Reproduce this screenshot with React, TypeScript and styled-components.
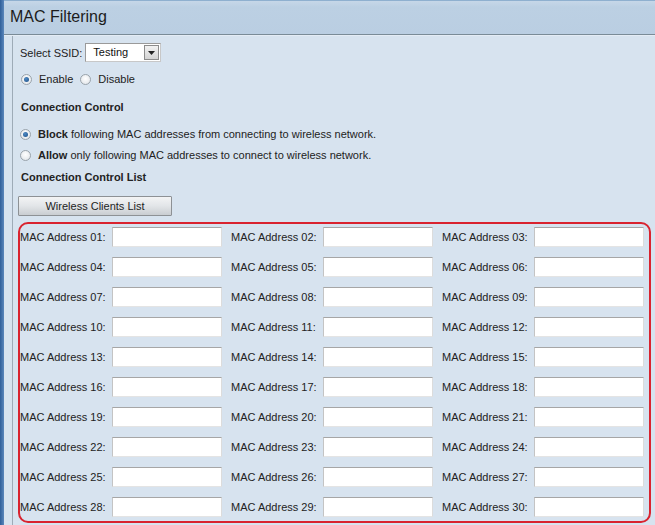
import styled, { createGlobalStyle } from 'styled-components';

const GlobalStyle = createGlobalStyle`
  html, body {
    margin: 0;
    padding: 0;
  }
  body {
    font-family: 'Liberation Sans', Arial, sans-serif;
    font-size: 11px;
    color: #222;
  }
`;

const macNumbers = Array.from({ length: 30 }, (_, i) => String(i + 1).padStart(2, '0'));

const Radio: React.FC<{ checked?: boolean }> = ({ checked }) => (
  <RadioDot $checked={checked} />
);

const App = () => {
  return (
    <Page>
      <GlobalStyle />
      <LeftStrip />
      <Main>
        <Header>
          <Title>MAC Filtering</Title>
        </Header>
        <Body>
          <Panel>
            <Row $top={7} $height={19}>
              <span>Select SSID:</span>
              <Select>
                <SelectValue>Testing</SelectValue>
                <SelectArrow>
                  <svg width="7" height="4" viewBox="0 0 7 4">
                    <path d="M0 0 L7 0 L3.5 4 Z" fill="#222" />
                  </svg>
                </SelectArrow>
              </Select>
            </Row>
            <Row $top={10} $height={14} $shift={-1}>
              <Radio checked />
              <OptionText>Enable</OptionText>
              <Radio />
              <OptionText>Disable</OptionText>
            </Row>
            <Heading $top={14}>Connection Control</Heading>
            <Row $top={13} $height={14} $shift={-2}>
              <Radio checked />
              <OptionText><b>Block</b> following MAC addresses from connecting to wireless network.</OptionText>
            </Row>
            <Row $top={7} $height={14} $shift={-2}>
              <Radio />
              <OptionText><b>Allow</b> only following MAC addresses to connect to wireless network.</OptionText>
            </Row>
            <Heading $top={8}>Connection Control List</Heading>
            <ClientsButton>Wireless Clients List</ClientsButton>
            <Highlight>
              <MacGrid>
                {macNumbers.map((n) => (
                  <MacCell key={n}>
                    <MacLabel>MAC Address {n}:</MacLabel>
                    <MacInput />
                  </MacCell>
                ))}
              </MacGrid>
            </Highlight>
          </Panel>
        </Body>
      </Main>
    </Page>
  );
};

const Page = styled.div`
  display: flex;
  width: 655px;
  height: 525px;
  overflow: hidden;
  background: #d7e3ef;
`;

const LeftStrip = styled.div`
  width: 4px;
  flex-shrink: 0;
  background: linear-gradient(to right, #2f5f9a, #5b87bb);
`;

const Main = styled.div`
  flex: 1;
  display: flex;
  flex-direction: column;
`;

const Header = styled.div`
  height: 35px;
  box-sizing: border-box;
  display: flex;
  align-items: center;
  padding-left: 6px;
  background: linear-gradient(to bottom, #c6d7e8 0px, #bcd0e3 6px, #bacee2 100%);
  border-top: 1px solid #8fb0cf;
  border-bottom: 1px solid #7a8b97;
`;

const Title = styled.h1`
  margin: 0;
  font-size: 16px;
  font-weight: normal;
  color: #1c1c1c;
  padding-bottom: 1px;
`;

const Body = styled.div`
  flex: 1;
  padding-left: 8px;
  background: #d7e3ef;
  border-top: 1px solid #e4ecf5;
  display: flex;
`;

const Panel = styled.div`
  flex: 1;
  border-left: 1px solid #9eabb7;
  padding-left: 7px;
  display: flex;
  flex-direction: column;
  align-items: flex-start;
`;

const Row = styled.div<{ $top: number; $height: number; $shift?: number }>`
  display: flex;
  align-items: center;
  margin-top: ${(p) => p.$top}px;
  margin-left: ${(p) => p.$shift ?? 0}px;
  height: ${(p) => p.$height}px;
  gap: 5px;
`;

const Select = styled.div`
  display: flex;
  width: 76px;
  height: 19px;
  margin-left: -2px;
  box-sizing: border-box;
  background: #fff;
  border: 1px solid #9a9a9a;
  border-right-color: #c8c8c8;
  border-bottom-color: #c8c8c8;
`;

const SelectValue = styled.span`
  flex: 1;
  padding-left: 7px;
  line-height: 16px;
  font-size: 11px;
  color: #111;
`;

const SelectArrow = styled.span`
  width: 15px;
  margin: 1px;
  display: flex;
  align-items: center;
  justify-content: center;
  background: linear-gradient(to bottom, #f2f2f2, #d4d4d4);
  border: 1px solid #8c8c8c;
  box-sizing: border-box;
`;

const RadioDot = styled.span<{ $checked?: boolean }>`
  width: 11px;
  height: 11px;
  box-sizing: border-box;
  border-radius: 50%;
  border: 1px solid #9aa3ab;
  background: radial-gradient(circle at 50% 40%, #ffffff 0%, #e7eaed 70%, #d3d8dd 100%);
  position: relative;
  flex-shrink: 0;
  margin-left: 2px;

  &::after {
    content: '';
    display: ${(p) => (p.$checked ? 'block' : 'none')};
    position: absolute;
    left: 2px;
    top: 2px;
    width: 5px;
    height: 5px;
    border-radius: 50%;
    background: radial-gradient(circle at 40% 35%, #4f8ac4, #1c4f86);
  }
`;

const OptionText = styled.span`
  margin-left: 2px;
  color: #222;
`;

const Heading = styled.div<{ $top: number }>`
  margin-top: ${(p) => p.$top}px;
  height: 14px;
  line-height: 14px;
  font-weight: bold;
  color: #222;
  margin-left: 1px;
`;

const ClientsButton = styled.button`
  margin-top: 12px;
  margin-left: -2px;
  width: 154px;
  height: 20px;
  padding: 0;
  box-sizing: border-box;
  font-family: 'Liberation Sans', Arial, sans-serif;
  font-size: 11px;
  color: #1e1e1e;
  background: linear-gradient(to bottom, #f3f4f5 0%, #e2e5e8 50%, #c9cdd1 100%);
  border: 1px solid #8d9195;
  border-radius: 1px;
`;

const Highlight = styled.div`
  margin-top: 6px;
  margin-left: -2px;
  width: 633px;
  height: 301px;
  box-sizing: border-box;
  border: 2px solid #d9232f;
  border-radius: 10px;
  padding: 3px 5px 0 0;
`;

const MacGrid = styled.div`
  display: grid;
  grid-template-columns: repeat(3, 202px);
  column-gap: 9px;
  row-gap: 10px;
`;

const MacCell = styled.div`
  display: flex;
  align-items: center;
  height: 20px;
`;

const MacLabel = styled.span`
  width: 92px;
  white-space: nowrap;
  color: #222;
`;

const MacInput = styled.input`
  width: 110px;
  height: 20px;
  box-sizing: border-box;
  padding: 0;
  background: #fff;
  border: 1px solid;
  border-color: #a6a6a6 #dcdcdc #e4e4e4 #c4c4c4;
  outline: none;
`;

export default App;
